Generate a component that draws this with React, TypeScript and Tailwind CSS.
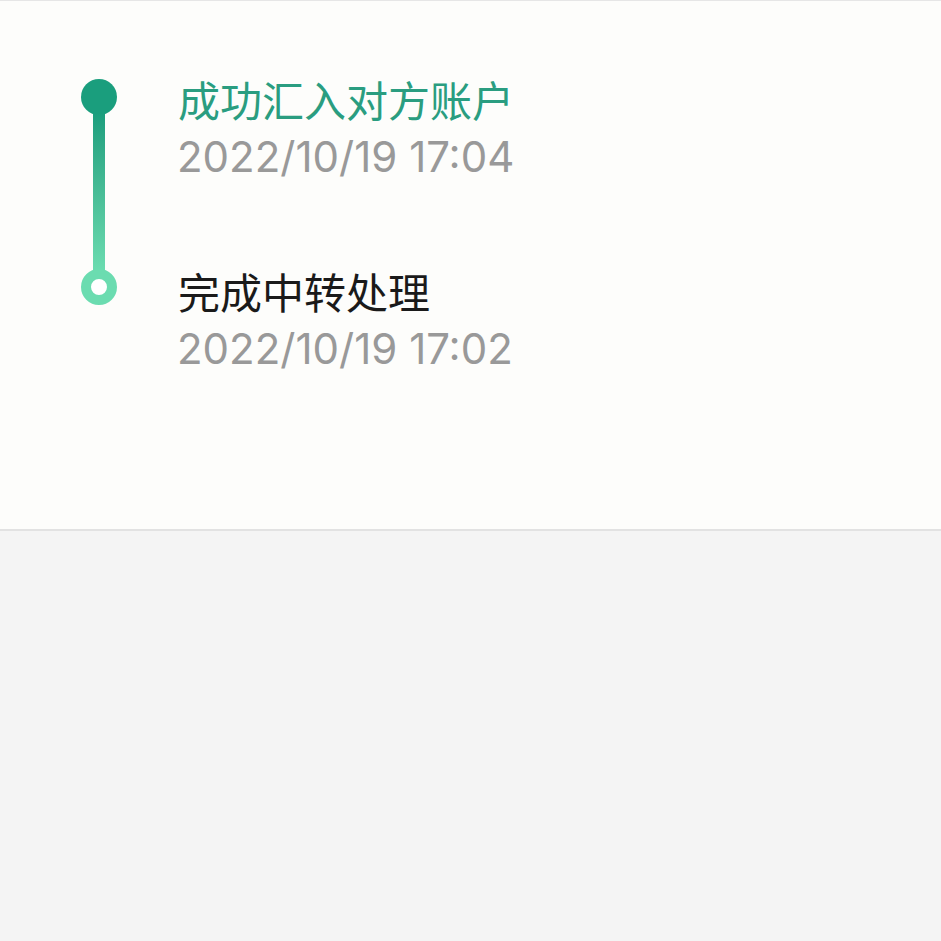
export default function App() {
  const cjk = { fontFamily: '"Noto Sans CJK SC", "Noto Sans", sans-serif' };
  const num = { fontFamily: 'Inter, "Noto Sans CJK SC", sans-serif' };
  return (
    <div className="min-h-screen bg-[#f4f4f4]">
      <div className="h-[531px] bg-[#fdfdfb] border-t border-t-[#e6e6e6] border-b-2 border-b-[#e2e2e2] flex pl-[81px] pt-[69px]">
        <div className="flex flex-col items-center w-[36px] pt-[9px]">
          <div className="w-[36px] h-[36px] rounded-full bg-[#1a9e7d]" />
          <div className="w-[12px] h-[158px] -my-[2px] bg-gradient-to-b from-[#1a9e7d] to-[#6bdcb0]" />
          <div className="w-[36px] h-[36px] rounded-full border-[10px] border-[#6bdcb0] bg-white" />
        </div>
        <div className="ml-[61px] flex flex-col">
          <div className="flex flex-col">
            <div className="text-[42px] leading-[58px] text-[#2a9d80]" style={cjk}>成功汇入对方账户</div>
            <div className="text-[42px] leading-[58px] text-[#999999] -ml-[1px]" style={num}>2022/10/19 17:04</div>
          </div>
          <div className="flex flex-col mt-[76px]">
            <div className="text-[42px] leading-[58px] text-[#1a1a1a]" style={cjk}>完成中转处理</div>
            <div className="text-[42px] leading-[58px] text-[#999999] -ml-[1px]" style={num}>2022/10/19 17:02</div>
          </div>
        </div>
      </div>
    </div>
  );
}
